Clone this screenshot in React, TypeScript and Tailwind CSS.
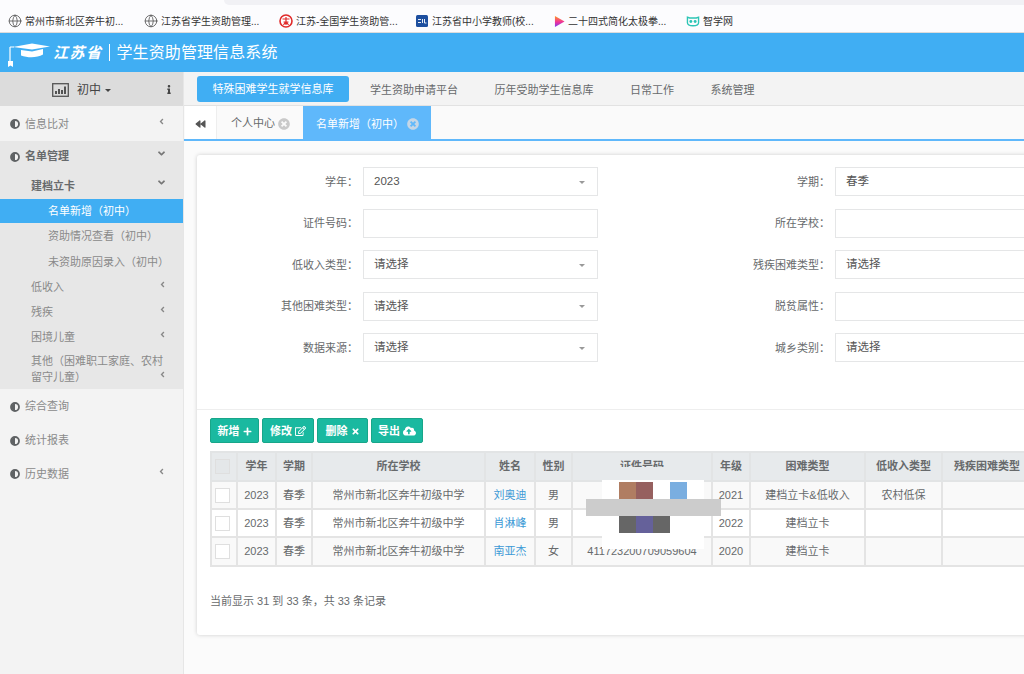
import React from "react";
import { Globe } from "lucide-react";
import { FaAngleLeft, FaAngleDown, FaInfo, FaBackward, FaTimesCircle, FaPlus, FaRegEdit, FaTimes, FaCloudUploadAlt } from "react-icons/fa";

const RedSeal = () => (
  <svg viewBox="0 0 14 14" className="h-[14px] w-[14px]">
    <circle cx="7" cy="7" r="6" fill="#fff" stroke="#e02a2a" strokeWidth="1.6" />
    <path d="M3.5 5h7M7 3v8M4.5 8h5M4.5 11l2-3M9.5 11l-2-3" stroke="#e02a2a" strokeWidth="1.2" fill="none" />
  </svg>
);
const BlueSquare = () => (
  <svg viewBox="0 0 14 14" className="h-[14px] w-[14px]">
    <rect x="1" y="1" width="12" height="12" rx="1.5" fill="#1d4f9f" />
    <path d="M3 5.5h3M3 8.5h3M7.5 5v4M9.5 5v4h2" stroke="#fff" strokeWidth="0.9" fill="none" />
  </svg>
);
const PlayIcon = () => (
  <svg viewBox="0 0 12 14" className="h-[13px] w-[11px]">
    <defs>
      <linearGradient id="pl" x1="0" y1="0" x2="0" y2="1">
        <stop offset="0" stopColor="#ff9a1f" />
        <stop offset="0.55" stopColor="#f0319a" />
        <stop offset="1" stopColor="#7a3df0" />
      </linearGradient>
    </defs>
    <path d="M1 1L11.500 7L1 13Z" fill="url(#pl)" />
  </svg>
);
const OwlIcon = () => (
  <svg viewBox="0 0 16 14" className="h-[12px] w-[14px]">
    <path d="M1.500 2.500L4 3.500H12L14.500 2.500V9C14.500 11 12.500 12.500 8 12.500S1.500 11 1.500 9Z" fill="none" stroke="#2cc5b5" strokeWidth="1.600" />
    <circle cx="5.500" cy="7.500" r="1.700" fill="#2cc5b5" />
    <circle cx="10.500" cy="7.500" r="1.700" fill="#2cc5b5" />
  </svg>
);

const globe = <Globe size={14} strokeWidth={1.4} className="text-[#555]" />;
const bookmarks: [React.ReactNode, string, string, string][] = [
  [globe, "常州市新北区奔牛初...", "w-[136px]", "w-[14px]"],
  [globe, "江苏省学生资助管理...", "w-[135px]", "w-[14px]"],
  [<RedSeal />, "江苏-全国学生资助管...", "w-[136px]", "w-[14px]"],
  [<BlueSquare />, "江苏省中小学教师(校...", "w-[138px]", "w-[14px]"],
  [<PlayIcon />, "二十四式简化太极拳...", "w-[133px]", "w-[12px]"],
  [<OwlIcon />, "智学网", "w-[60px]", "w-[14px]"],
];

const Bookmarks = () => (
  <div className="h-[33px] shrink-0 border-b border-[#dcdcdc] bg-[#fcfcfe]">
    <div className="ml-[224px] h-[5px] rounded-bl-md bg-[#f1f1f5]" />
    <div className="flex h-[27px] items-center pl-[8px] pt-[5px]">
      {bookmarks.map(([icon, label, w, iw]) => (
        <div key={label} className={`flex items-center gap-[3px] ${w}`}>
          <span className={`flex h-[14px] items-center justify-center ${iw}`}>{icon}</span>
          <span className="whitespace-nowrap text-[10px] text-[#333]">{label}</span>
        </div>
      ))}
    </div>
  </div>
);

const Header = () => (
  <div className="flex h-[39px] shrink-0 items-center bg-[#40aef3] pl-[8px] text-white">
    <svg viewBox="0 0 42 24" className="mt-[5px] h-[24px] w-[42px]">
      <path d="M5 4L24 0.500L42 3.500L24 6.500Z" fill="#fff" />
      <path d="M13 7L24 8.500L35 6V11.500C29 15 20 15 13 12.500Z" fill="#fff" />
      <path d="M2 4H6M2 4V18" stroke="#fff" strokeWidth="1.200" fill="none" />
      <path d="M0 18H5V24L2.500 22.500L0 24Z" fill="#fff" />
    </svg>
    <span className="ml-[3px] whitespace-nowrap text-[15px] font-bold italic tracking-[1.500px] [font-family:'Noto_Sans_CJK_SC',serif]">江苏省</span>
    <span className="ml-[6px] h-[17px] w-px bg-white" />
    <span className="ml-[7px] whitespace-nowrap text-[16px] tracking-[0.100px]">学生资助管理信息系统</span>
  </div>
);

const Dot = () => (
  <svg viewBox="0 0 10 10" className="h-[10px] w-[10px] shrink-0">
    <circle cx="5" cy="5" r="4" fill="#f3f3f3" stroke="#5f6264" strokeWidth="1.800" />
    <path d="M5 1.500A3.500 3.500 0 0 0 5 8.500Z" fill="#5f6264" />
  </svg>
);

const ChartBox = () => (
  <svg viewBox="0 0 17 14" className="mr-[8px] h-[14px] w-[17px]">
    <rect x="0.700" y="0.700" width="15.600" height="12.600" fill="none" stroke="#555" strokeWidth="1.300" />
    <path d="M4 11V8M7 11V6M10 11V7M13 11V3.500" stroke="#444" strokeWidth="1.800" />
  </svg>
);

const TopItem = ({ label, chevron, bold, className = "" }: { label: string; chevron?: boolean; bold?: boolean; className?: string }) => (
  <div className={`relative flex items-center gap-[5px] pl-[10px] pt-[1px] ${bold ? "font-bold" : ""} ${className}`}>
    <Dot />
    <span>{label}</span>
    {chevron && <FaAngleLeft className="absolute right-[17px] top-1/2 h-[9px] w-[9px] -translate-y-[7px] text-[#888]" />}
  </div>
);

const SubItem = ({ label, h = "h-[25px]" }: { label: string; h?: string }) => (
  <div className={`relative flex items-center pl-[31px] pr-[16px] pt-[1px] ${h}`}>
    <span>{label}</span>
    <FaAngleLeft className="absolute right-[16px] top-1/2 h-[9px] w-[9px] -translate-y-[7px] text-[#888]" />
  </div>
);

const Sidebar = () => (
  <aside className="flex w-[184px] shrink-0 flex-col border-r border-[#e6e6e6] bg-[#f3f3f3] text-[11px] text-[#8a8a8a]">
    <div className="relative flex h-[34px] shrink-0 items-center justify-center bg-[#dcdcdc] pr-[20px] pt-[2px] text-[12px] text-[#444]">
      <ChartBox />
      <span>初中</span>
      <span className="ml-[4px] h-0 w-0 border-x-[3px] border-t-[3px] border-x-transparent border-t-[#444]" />
      <FaInfo className="absolute right-[11px] top-[13px] h-[9px] w-[6px] text-[#444]" />
    </div>
    <TopItem label="信息比对" chevron className="h-[35px] text-[#888]" />
    <div className="h-[248px] bg-[#e7e7e7]">
      <div className="relative h-[30px]">
        <div className="flex h-full items-center gap-[5px] pl-[10px] pt-[1px] font-bold text-[#676a6c]">
          <Dot />
          <span>名单管理</span>
        </div>
        <FaAngleDown className="absolute right-[16px] top-[7px] h-[11px] w-[11px] text-[#777]" />
      </div>
      <div className="relative flex h-[28px] items-center pl-[31px] pt-[3px] font-bold text-[#676a6c]">
        建档立卡
        <FaAngleDown className="absolute right-[16px] top-[6px] h-[11px] w-[11px] text-[#777]" />
      </div>
      <div className="flex h-[24px] items-center bg-[#40aef3] pl-[48px] pt-[1px] text-white">名单新增（初中）</div>
      <div className="flex h-[26px] items-center pl-[48px] pt-[1px]">资助情况查看（初中）</div>
      <div className="flex h-[25px] items-center pl-[48px] pt-[1px]">未资助原因录入（初中）</div>
      <SubItem label="低收入" />
      <SubItem label="残疾" />
      <SubItem label="困境儿童" />
      <div className="relative pl-[31px] pr-[16px] pt-[4px] leading-[16px]">
        其他（困难职工家庭、农村留守儿童）
        <FaAngleLeft className="absolute right-[16px] top-[21px] h-[9px] w-[9px] text-[#888]" />
      </div>
    </div>
    <TopItem label="综合查询" className="h-[34px]" />
    <TopItem label="统计报表" className="h-[34px]" />
    <TopItem label="历史数据" chevron className="h-[33px]" />
  </aside>
);

const TopNav = () => (
  <div className="flex h-[34px] shrink-0 items-center gap-[36.500px] border-b border-[#e2e2e2] bg-[#f3f3f3] pl-[13px] text-[11px] text-[#676a6c]">
    <div className="-mr-[15.500px] flex h-[26px] w-[152px] items-center justify-center rounded-[3px] bg-[#40aef3] pt-[2px] text-white">特殊困难学生就学信息库</div>
    <span className="pt-[3px]">学生资助申请平台</span>
    <span className="pt-[3px]">历年受助学生信息库</span>
    <span className="pt-[3px]">日常工作</span>
    <span className="pt-[3px]">系统管理</span>
  </div>
);

const Tabs = () => (
  <div className="flex h-[35px] shrink-0 border-b-2 border-[#5fb8fb] bg-[#fafafa] text-[11px]">
    <div className="ml-[1px] flex h-full w-[32px] items-center justify-center border-r border-[#eee] bg-white pt-[2px]">
      <FaBackward className="h-[10px] w-[11px] text-[#555]" />
    </div>
    <div className="flex h-full w-[86px] items-center gap-[3px] bg-[#fafafa] pl-[14px] pt-[2px] text-[#676a6c]">
      <span>个人中心</span>
      <FaTimesCircle className="h-[12px] w-[12px] text-[#c9c9c9]" />
    </div>
    <div className="flex h-[34px] w-[128px] items-center bg-[#5fb8fb] pl-[13px] pt-[2px] text-white">
      <span>名单新增（初中）</span>
      <FaTimesCircle className="ml-[3px] h-[12px] w-[12px] text-[#c5d6e6]" />
    </div>
  </div>
);

const Caret = () => <span className="h-0 w-0 border-x-[3px] border-t-[3px] border-x-transparent border-t-[#999]" />;

const Field = ({ label, value, select }: { label: string; value?: string; select?: boolean }) => (
  <>
    <div className="flex items-center justify-end whitespace-nowrap pr-[5px] pt-[1px] text-[#676a6c]">{label}：</div>
    <div className="flex h-[29px] items-center justify-between border border-[#e5e6e7] bg-white pl-[10px] pr-[12px] pt-[1px] text-[11.500px] text-[#555]">
      <span>{value}</span>
      {select && <Caret />}
    </div>
  </>
);

const Form = () => (
  <div className="grid h-[255px] grid-cols-[161px_235px_237px_235px] content-start gap-y-[12.500px] border-b border-[#eee] pl-[5px] pt-[12px]">
    <Field label="学年" value="2023" select />
    <Field label="学期" value="春季" select />
    <Field label="证件号码" />
    <Field label="所在学校" />
    <Field label="低收入类型" value="请选择" select />
    <Field label="残疾困难类型" value="请选择" select />
    <Field label="其他困难类型" value="请选择" select />
    <Field label="脱贫属性" />
    <Field label="数据来源" value="请选择" select />
    <Field label="城乡类别" value="请选择" select />
  </div>
);

const ToolBtn = ({ label, w, icon }: { label: string; w: string; icon: React.ReactNode }) => (
  <div className={`flex h-[25px] items-center justify-center gap-[3px] rounded-[2px] border border-[#18a689] bg-[#1ab9a0] pt-[1px] font-bold text-white ${w}`}>
    <span>{label}</span>
    {icon}
  </div>
);

const Toolbar = () => (
  <div className="flex gap-[3px] pl-[13px] pt-[8px] text-[11px]">
    <ToolBtn label="新增" w="w-[49px]" icon={<FaPlus className="h-[9px] w-[9px]" />} />
    <ToolBtn label="修改" w="w-[52px]" icon={<FaRegEdit className="h-[10px] w-[11px]" />} />
    <ToolBtn label="删除" w="w-[51px]" icon={<FaTimes className="h-[9px] w-[9px]" />} />
    <ToolBtn label="导出" w="w-[52px]" icon={<FaCloudUploadAlt className="h-[12px] w-[13px]" />} />
  </div>
);

const widths = ["w-[26px]", "w-[39px]", "w-[36px]", "w-[173px]", "w-[50px]", "w-[37px]", "w-[140px]", "w-[38px]", "w-[115px]", "w-[77px]", "w-[90px]"];
const heads = ["", "学年", "学期", "所在学校", "姓名", "性别", "证件号码", "年级", "困难类型", "低收入类型", "残疾困难类型"];
const rows = [
  ["2023", "春季", "常州市新北区奔牛初级中学", "刘奥迪", "男", "", "2021", "建档立卡&低收入", "农村低保", ""],
  ["2023", "春季", "常州市新北区奔牛初级中学", "肖淋峰", "男", "", "2022", "建档立卡", "", ""],
  ["2023", "春季", "常州市新北区奔牛初级中学", "南亚杰", "女", "411723200709059604", "2020", "建档立卡", "", ""],
];
const rowHeights = ["h-[28px]", "h-[28px]", "h-[29px]"];

const Check = ({ muted }: { muted?: boolean }) => (
  <span className={`block h-[15px] w-[15px] border border-[#dfdfdf] ${muted ? "bg-[#e4e7e9]" : "bg-white"}`} />
);

const DataTable = () => (
  <div className="relative ml-[13px] mt-[8px] w-[1000px]">
    <table className="table-fixed border-collapse text-center text-[11px] text-[#676a6c]">
      <colgroup>
        {widths.map((w, i) => <col key={i} className={w} />)}
      </colgroup>
      <thead>
        <tr className="h-[29px] bg-[#e7eaec]">
          {heads.map((h, i) => (
            <th key={i} className="whitespace-nowrap border-2 border-[#e2e4e5] p-0 font-bold">
              {i === 0 ? <span className="flex justify-start pl-[3px]"><Check muted /></span> : h}
            </th>
          ))}
        </tr>
      </thead>
      <tbody>
        {rows.map((r, i) => (
          <tr key={i} className={`${rowHeights[i]} ${i === 1 ? "bg-white" : "bg-[#f9f9f9]"}`}>
            <td className="border-2 border-[#e4e4e4] p-0"><span className="flex justify-start pl-[3px]"><Check /></span></td>
            {r.map((c, j) => (
              <td key={j} className={`whitespace-nowrap border-2 border-[#e4e4e4] p-0 ${j === 3 ? "text-[#3d9ad6]" : ""}`}>{c}</td>
            ))}
          </tr>
        ))}
      </tbody>
    </table>
    {/* redaction patches lying over the ID column */}
    <div className="absolute left-[400px] top-[16px] h-[12px] w-[72px] bg-[#e7eaec]" />
    <div className="absolute left-[392px] top-[29px] h-[69px] w-[102px] bg-white" />
    <div className="absolute left-[409px] top-[31px] flex">
      <span className="h-[17px] w-[17px] bg-[#b07d62]" />
      <span className="h-[17px] w-[17px] bg-[#96605f]" />
      <span className="h-[17px] w-[17px] bg-white" />
      <span className="h-[17px] w-[17px] bg-[#7aaee0]" />
    </div>
    <div className="absolute left-[376px] top-[48px] h-[17px] w-[135px] bg-[#cccccc]" />
    <div className="absolute left-[409px] top-[65px] flex">
      <span className="h-[17px] w-[17px] bg-[#666666]" />
      <span className="h-[17px] w-[17px] bg-[#65619a]" />
      <span className="h-[17px] w-[17px] bg-[#666666]" />
    </div>
  </div>
);

export default function App() {
  return (
    <div className="flex h-[674px] w-[1024px] flex-col overflow-hidden bg-white text-[11px] [font-family:'Liberation_Sans','Noto_Sans_CJK_SC',sans-serif]">
      <Bookmarks />
      <Header />
      <div className="flex min-h-0 flex-1">
        <Sidebar />
        <main className="min-w-0 flex-1 overflow-hidden bg-[#fbfbfb]">
          <TopNav />
          <Tabs />
          <div className="pl-[13px] pt-[14px]">
            <div className="h-[480px] w-[1000px] rounded-[3px] bg-white shadow-[0_0_4px_rgba(0,0,0,0.18)]">
              <Form />
              <Toolbar />
              <DataTable />
              <div className="pl-[13px] pt-[26px] text-[#676a6c]">当前显示 31 到 33 条，共 33 条记录</div>
            </div>
          </div>
        </main>
      </div>
    </div>
  );
}
